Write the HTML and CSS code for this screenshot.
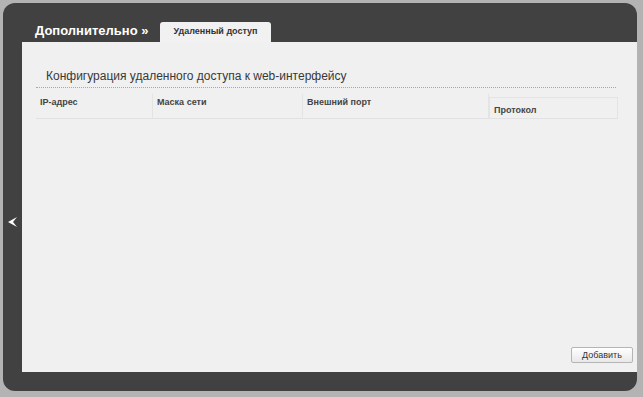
FILE: index.html
```html
<!DOCTYPE html>
<html lang="ru">
<head>
    <meta charset="UTF-8">
    <title>Удаленный доступ</title>
    <link rel="stylesheet" href="styles.css">
</head>
<body>
    <div class="frame">
        <div class="side">
            <svg width="9" height="10" viewBox="0 0 9 10"><path d="M0 5 L9 0 L5 5 L9 10 Z" fill="#fff"/></svg>
        </div>
        <div class="main">
            <div class="top">
                <div class="title">Дополнительно »</div>
                <div class="tab">Удаленный доступ</div>
            </div>
            <div class="panel">
                <div class="section">
                    <div class="heading">Конфигурация удаленного доступа к web-интерфейсу</div>
                    <div class="table">
                        <div class="col c1">IP-адрес</div>
                        <div class="col c2">Маска сети</div>
                        <div class="col c3">Внешний порт</div>
                        <div class="col c4">Протокол</div>
                    </div>
                </div>
                <div class="actions">
                    <button class="btn">Добавить</button>
                </div>
            </div>
        </div>
    </div>
</body>
</html>
```

FILE: styles.css
```css
body {
    margin: 0;
    background-color: #b3b3b3;
    font-family: "Liberation Sans", Arial, sans-serif;
}
.frame {
    margin: 3px;
    width: 634px;
    height: 388px;
    background-color: #414141;
    border-radius: 12px;
    display: flex;
    box-sizing: border-box;
    padding-bottom: 19px;
}
.side {
    width: 19px;
    display: flex;
    align-items: center;
    justify-content: center;
    padding-top: 68px;
}
.main {
    flex: 1;
    display: flex;
    flex-direction: column;
}
.top {
    height: 39px;
    display: flex;
    align-items: flex-end;
}
.title {
    color: #fff;
    font-weight: bold;
    font-size: 13px;
    margin-left: 13px;
    margin-bottom: 4px;
    width: 125px;
}
.tab {
    background-color: #f1f1f1;
    color: #333;
    font-weight: bold;
    font-size: 9px;
    width: 111px;
    height: 20px;
    line-height: 19px;
    text-align: center;
    border-radius: 3px 3px 0 0;
}
.panel {
    flex: 1;
    background-color: #f0f0f0;
    display: flex;
    flex-direction: column;
    justify-content: space-between;
}
.section {
    padding: 27px 0 0 14px;
}
.heading {
    font-size: 12px;
    color: #383838;
    padding: 0 0 4px 10px;
    width: 570px;
    border-bottom: 1px dotted #a8a8a8;
}
.table {
    display: flex;
    margin-top: 6px;
    width: 582px;
    height: 24px;
    border-bottom: 1px solid #e2e2e2;
}
.col {
    font-size: 9px;
    font-weight: bold;
    color: #444;
    padding: 3px 0 0 4px;
    box-sizing: border-box;
    border-right: 1px solid #e4e4e4;
}
.c1 { width: 117px; }
.c2 { width: 150px; }
.c3 { width: 186px; }
.c4 {
    width: 129px;
    padding-top: 7px;
    margin-top: 3px;
    border-top: 1px solid #e4e4e4;
    border-left: 1px solid #e4e4e4;
}
.actions {
    display: flex;
    justify-content: flex-end;
    padding: 0 4px 9px 0;
}
.btn {
    width: 62px;
    height: 16px;
    padding: 0;
    font-family: "Liberation Sans", Arial, sans-serif;
    font-size: 9px;
    color: #333;
    background: linear-gradient(#ffffff, #e8e8e8);
    border: 1px solid #b5b5b5;
    border-radius: 2px;
}
```
